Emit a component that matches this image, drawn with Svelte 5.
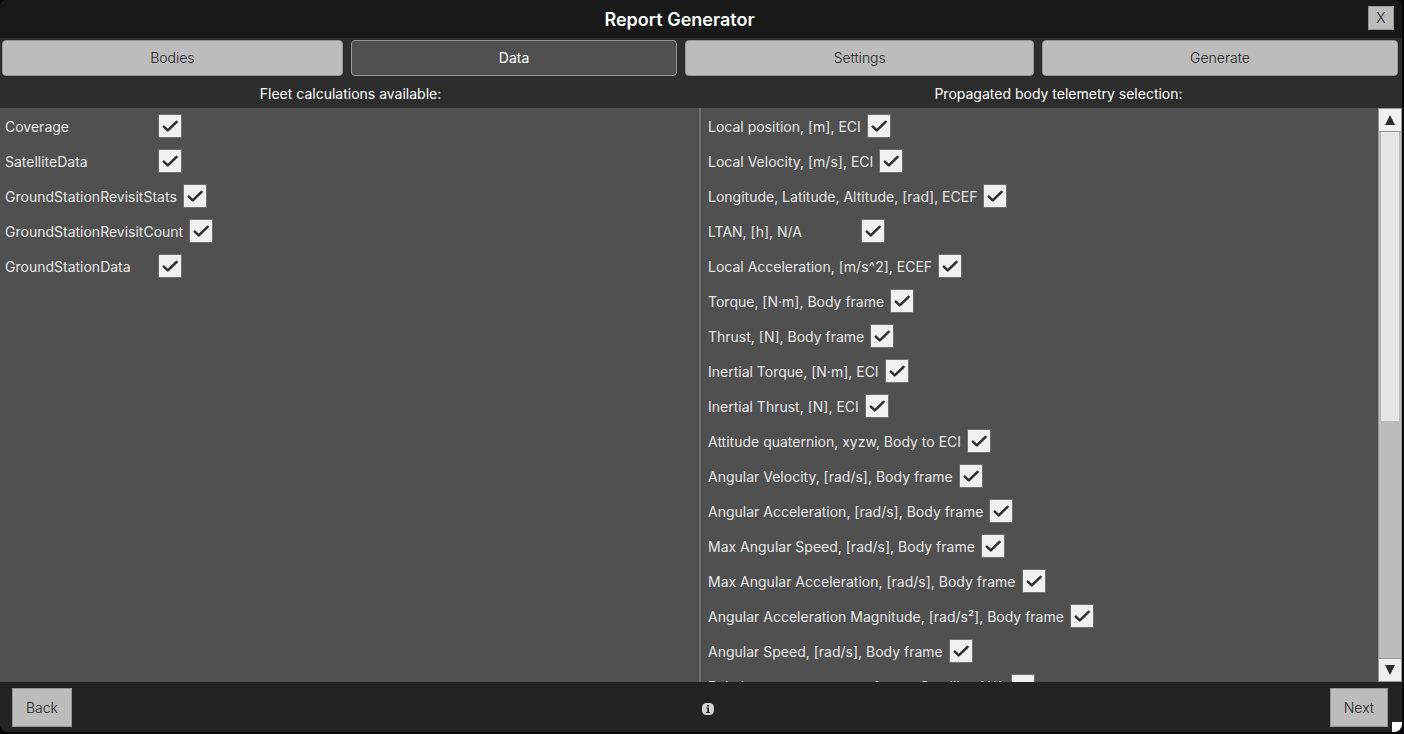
<script>
  const tabs = ['Bodies', 'Data', 'Settings', 'Generate'];
  let activeTab = $state('Data');

  let fleet = $state(
    [
      'Coverage',
      'SatelliteData',
      'GroundStationRevisitStats',
      'GroundStationRevisitCount',
      'GroundStationData',
    ].map((name) => ({ name, checked: true }))
  );

  let telemetry = $state([
    ...[
      'Local position, [m], ECI',
      'Local Velocity, [m/s], ECI',
      'Longitude, Latitude, Altitude, [rad], ECEF',
      'LTAN, [h], N/A',
      'Local Acceleration, [m/s^2], ECEF',
      'Torque, [N·m], Body frame',
      'Thrust, [N], Body frame',
      'Inertial Torque, [N·m], ECI',
      'Inertial Thrust, [N], ECI',
      'Attitude quaternion, xyzw, Body to ECI',
      'Angular Velocity, [rad/s], Body frame',
      'Angular Acceleration, [rad/s], Body frame',
      'Max Angular Speed, [rad/s], Body frame',
      'Max Angular Acceleration, [rad/s], Body frame',
      'Angular Acceleration Magnitude, [rad/s²], Body frame',
      'Angular Speed, [rad/s], Body frame',
    ].map((name) => ({ name, checked: true })),
    { name: 'Relative sensor sources, frame, Satellite, N/A', checked: false },
  ]);

  let list;

  function scroll(amount) {
    list.scrollTop += amount;
  }
</script>

{#snippet option(item, id)}
  <div class="option">
    <label for={id}>{item.name}</label>
    <span class="check">
      <input {id} type="checkbox" bind:checked={item.checked} />
      {#if item.checked}
        <svg viewBox="0 0 24 24" aria-hidden="true">
          <path d="M5.8 12.6 L9.8 16.4 L18.6 7.8" />
        </svg>
      {/if}
    </span>
  </div>
{/snippet}

<div class="window">
  <header>
    <h1>Report Generator</h1>
    <button class="btn close">X</button>
  </header>

  <nav>
    {#each tabs as tab}
      <button class="tab" class:active={tab === activeTab} onclick={() => (activeTab = tab)}>
        {tab}
      </button>
    {/each}
  </nav>

  <div class="titles">
    <h2>Fleet calculations available:</h2>
    <h2>Propagated body telemetry selection:</h2>
  </div>

  <main>
    <section class="fleet">
      {#each fleet as item, i}
        {@render option(item, `fleet-${i}`)}
      {/each}
    </section>

    <section class="telemetry">
      <div class="list" bind:this={list}>
        {#each telemetry as item, i}
          {@render option(item, `telemetry-${i}`)}
        {/each}
      </div>
      <div class="scrollbar">
        <button aria-label="Scroll up" onclick={() => scroll(-35)}>
          <svg viewBox="0 0 10 10"><path d="M5 0 L10 10 H0 Z" /></svg>
        </button>
        <div class="track"><div class="thumb"></div></div>
        <button aria-label="Scroll down" onclick={() => scroll(35)}>
          <svg viewBox="0 0 10 10"><path d="M0 0 H10 L5 10 Z" /></svg>
        </button>
      </div>
    </section>
  </main>

  <footer>
    <button class="btn">Back</button>
    <svg class="info" viewBox="0 0 12 12" role="img" aria-label="Info">
      <rect width="12" height="12" rx="4.5" />
      <path d="M5 2 H7 V3.5 H5 Z M4.5 4.6 H7 V9 H7.8 V10 H4.2 V9 H5.2 V5.5 H4.5 Z" />
    </svg>
    <button class="btn">Next</button>
    <span class="grip"></span>
  </footer>
</div>

<style>
  :global(body) {
    background: #05070d;
  }

  .window {
    display: flex;
    flex-direction: column;
    height: calc(100vh - 2px);
    margin-right: 2px;
    background: #2d2d2d;
    border-radius: 8px;
    overflow: hidden;
    color: #e6e6e6;
    font-family: Inter, 'Liberation Sans', sans-serif;
    font-size: 14px;
    line-height: 20px;
  }

  button {
    font: inherit;
    font-weight: 300;
    cursor: pointer;
  }

  header {
    position: relative;
    display: flex;
    align-items: center;
    justify-content: center;
    height: 38px;
    background: #191919;
  }

  h1 {
    margin: 0;
    padding: 2px 43px 0 0;
    font-size: 18px;
    font-weight: 600;
    color: #fff;
  }

  .btn {
    padding: 1px 13px 0;
    height: 39px;
    color: #232323;
    background: #bcbcbc;
    border: 1px solid #969696;
  }

  .btn.close {
    position: absolute;
    top: 6px;
    right: 8px;
    width: 26px;
    height: 24px;
    padding: 0;
  }

  nav {
    display: flex;
    gap: 8px;
    padding: 2px 4px 2px 2px;
  }

  .tab {
    flex: 1 1 auto;
    height: 36px;
    padding: 0;
    color: #232323;
    background: #bcbcbc;
    border: 1px solid #969696;
    border-radius: 4px;
  }

  .tab.active {
    color: #fff;
    background: #505050;
    font-weight: 400;
  }

  .titles {
    display: grid;
    grid-template-columns: 1fr 1fr;
    padding: 6px 0 4px;
  }

  h2 {
    margin: 0;
    font-size: 14px;
    font-weight: 400;
    text-align: center;
    color: #fff;
  }

  h2:last-child {
    padding-left: 14px;
  }

  main {
    display: grid;
    grid-template-columns: 1fr 1fr;
    flex: 1;
    min-height: 0;
    background: #505050;
  }

  .fleet {
    padding: 0 5px;
    border-right: 2px solid #6e6e6e;
  }

  .telemetry {
    display: flex;
    min-height: 0;
  }

  .list {
    flex: 1;
    padding: 0 7px;
    overflow: hidden;
  }

  .option {
    display: flex;
    align-items: center;
    gap: 6px;
    height: 35px;
  }

  label {
    min-width: 147px;
    padding-top: 2px;
    white-space: nowrap;
  }

  .check {
    position: relative;
    width: 24px;
    height: 24px;
  }

  input {
    appearance: none;
    display: block;
    width: 24px;
    height: 24px;
    margin: 0;
    background: #f0f0f0;
    border: 1px solid #6e6e6e;
  }

  .check svg {
    position: absolute;
    inset: 0;
    fill: none;
    stroke: #2d2d2d;
    stroke-width: 2.5;
    stroke-linecap: round;
    stroke-linejoin: round;
    pointer-events: none;
  }

  .scrollbar {
    display: flex;
    flex-direction: column;
    width: 24px;
    background: #bcbcbc;
    border: 1px solid #969696;
    box-sizing: border-box;
  }

  .scrollbar button {
    display: flex;
    align-items: center;
    justify-content: center;
    height: 23px;
    padding: 0;
    background: #f0f0f0;
    border: 0;
    border-bottom: 1px solid #969696;
  }

  .scrollbar button:last-child {
    border-top: 1px solid #969696;
    border-bottom: 0;
  }

  .scrollbar svg {
    width: 10px;
    height: 10px;
    fill: #2d2d2d;
  }

  .track {
    flex: 1;
    padding: 0 2px;
  }

  .thumb {
    height: 55%;
    background: #e6e6e6;
  }

  footer {
    position: relative;
    display: flex;
    align-items: center;
    justify-content: space-between;
    height: 50px;
    padding: 0 14px 0 12px;
    background: #232323;
  }

  .info {
    width: 12px;
    height: 12px;
    margin: 4px 0 0 14px;
    fill: #d2d2d2;
  }

  .info path {
    fill: #232323;
  }

  .grip {
    position: absolute;
    right: 0;
    bottom: 0;
    width: 10px;
    height: 10px;
    background: #fff;
  }
</style>
